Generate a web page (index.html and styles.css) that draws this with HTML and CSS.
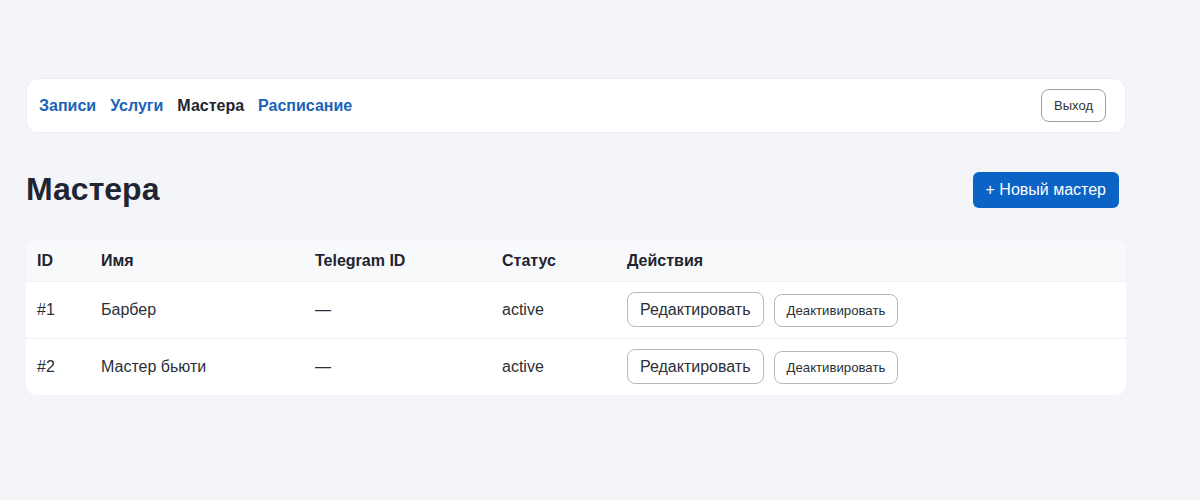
FILE: index.html
```html
<!DOCTYPE html>
<html lang="ru">
<head>
<meta charset="UTF-8" />
<title>Мастера</title>
<link rel="stylesheet" href="styles.css">
</head>
<body>

<div class="page">
  <nav class="topbar">
    <div class="links">
      <a href="#">Записи</a>
      <a href="#">Услуги</a>
      <a href="#" class="current">Мастера</a>
      <a href="#">Расписание</a>
    </div>
    <button class="btn-exit">Выход</button>
  </nav>

  <div class="head">
    <h1>Мастера</h1>
    <button class="btn-primary">+ Новый мастер</button>
  </div>

  <table class="grid">
    <thead>
      <tr>
        <th class="c-id">ID</th>
        <th class="c-name">Имя</th>
        <th class="c-tg">Telegram ID</th>
        <th class="c-status">Статус</th>
        <th>Действия</th>
      </tr>
    </thead>
    <tbody>
      <tr>
        <td>#1</td>
        <td>Барбер</td>
        <td>—</td>
        <td>active</td>
        <td>
          <div class="actions">
            <button class="btn">Редактировать</button>
            <button class="btn btn-sm">Деактивировать</button>
          </div>
        </td>
      </tr>
      <tr>
        <td>#2</td>
        <td>Мастер бьюти</td>
        <td>—</td>
        <td>active</td>
        <td>
          <div class="actions">
            <button class="btn">Редактировать</button>
            <button class="btn btn-sm">Деактивировать</button>
          </div>
        </td>
      </tr>
    </tbody>
  </table>
</div>

</body>
</html>
```

FILE: styles.css
```css
* {
  box-sizing: border-box;
}
body {
  margin: 0;
  background: #f4f5f9;
  font-family: "Liberation Sans", Arial, sans-serif;
  color: #1f2430;
}
.page {
  width: 1100px;
  margin-left: 26px;
  padding-top: 78px;
}

.topbar {
  display: flex;
  align-items: center;
  justify-content: space-between;
  height: 55px;
  padding: 0 19px 0 12px;
  background: #fff;
  border: 1px solid #eceef3;
  border-radius: 12px;
}
.links {
  display: flex;
  gap: 14px;
}
.links a {
  font-size: 16px;
  font-weight: 700;
  color: #1a63b8;
  text-decoration: none;
}
.links a.current {
  color: #1f2430;
}
.btn-exit {
  height: 33px;
  padding: 0 12px;
  font-family: inherit;
  font-size: 13px;
  color: #333;
  background: #fff;
  border: 1px solid #9aa0a8;
  border-radius: 8px;
}

.head {
  display: flex;
  align-items: center;
  justify-content: space-between;
  padding-right: 7px;
  margin-top: 38px;
}
h1 {
  margin: 0;
  font-size: 32px;
  font-weight: 700;
  color: #1f2633;
}
.btn-primary {
  height: 36px;
  padding: 0 13px;
  font-family: inherit;
  font-size: 16px;
  color: #fff;
  background: #0b63c6;
  border: none;
  border-radius: 6px;
}

.grid {
  width: 100%;
  margin-top: 33px;
  border-collapse: collapse;
  background: #fff;
  border-radius: 10px;
  overflow: hidden;
  font-size: 16px;
}
.grid th {
  height: 40px;
  padding: 0 11px;
  text-align: left;
  font-weight: 700;
  background: #f8f9fb;
  border-bottom: 1px solid #eef0f3;
}
.grid td {
  height: 57px;
  padding: 0 11px;
  color: #2a2f38;
}
.grid tbody tr + tr td {
  border-top: 1px solid #eef0f3;
}
.c-id { width: 64px; }
.c-name { width: 214px; }
.c-tg { width: 187px; }
.c-status { width: 125px; }

.actions {
  display: flex;
  align-items: center;
  gap: 10px;
}
.btn {
  height: 35px;
  padding: 0 12px;
  font-family: inherit;
  font-size: 16px;
  color: #2a2f38;
  background: #fff;
  border: 1px solid #b4b8bf;
  border-radius: 8px;
}
.btn-sm {
  height: 33px;
  padding: 0 12px;
  font-size: 13.2px;
  margin-top: 2px;
}
```
